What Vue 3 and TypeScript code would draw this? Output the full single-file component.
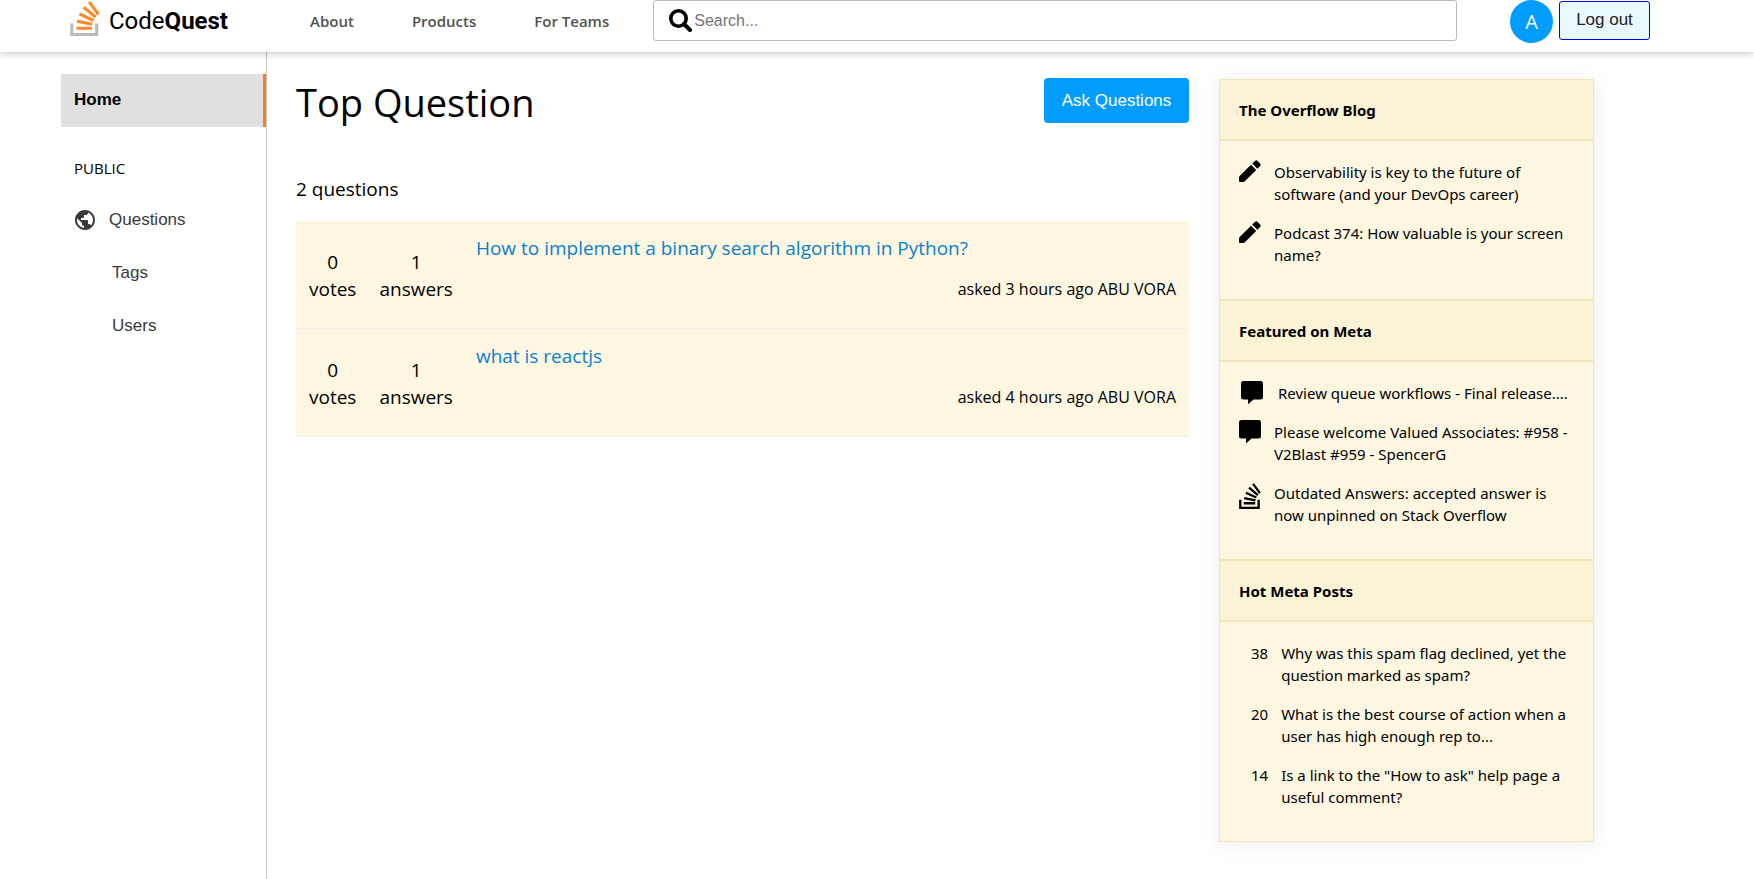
<script setup lang="ts">
import { ref } from 'vue'

interface Question {
  id: number
  votes: number
  answers: number
  title: string
  asked: string
  author: string
}

type IconName = 'pencil' | 'comment' | 'stack'

interface WidgetItem {
  icon?: IconName
  score?: number
  text: string
  single?: boolean
}

interface WidgetSection {
  title: string
  items: WidgetItem[]
}

const query = ref('')

const navLinks: string[] = ['About', 'Products', 'For Teams']

const questions: Question[] = [
  { id: 1, votes: 0, answers: 1, title: 'How to implement a binary search algorithm in Python?', asked: '3 hours ago', author: 'ABU VORA' },
  { id: 2, votes: 0, answers: 1, title: 'what is reactjs', asked: '4 hours ago', author: 'ABU VORA' },
]

const sections: WidgetSection[] = [
  {
    title: 'The Overflow Blog',
    items: [
      { icon: 'pencil', text: 'Observability is key to the future of software (and your DevOps career)' },
      { icon: 'pencil', text: 'Podcast 374: How valuable is your screen name?' },
    ],
  },
  {
    title: 'Featured on Meta',
    items: [
      { icon: 'comment', text: 'Review queue workflows - Final release....', single: true },
      { icon: 'comment', text: 'Please welcome Valued Associates: #958 - V2Blast #959 - SpencerG' },
      { icon: 'stack', text: 'Outdated Answers: accepted answer is now unpinned on Stack Overflow' },
    ],
  },
  {
    title: 'Hot Meta Posts',
    items: [
      { score: 38, text: 'Why was this spam flag declined, yet the question marked as spam?' },
      { score: 20, text: 'What is the best course of action when a user has high enough rep to...' },
      { score: 14, text: 'Is a link to the "How to ask" help page a useful comment?' },
    ],
  },
]

const iconBox: Record<IconName, string> = {
  pencil: '0 0 22 23',
  comment: '0 0 22 23',
  stack: '1.89 -2 20.22 26',
}

const iconPath: Record<IconName, string> = {
  pencil:
    'M12 4.800L17.200 10L5.800 21.300Q5.200 22 4.200 22H.8Q0 22 0 21.200V17.800Q0 16.800 .7 16.100zM13.200 3.600L16 .9Q17.300 -.2 18.600 .9L21.100 3.400Q22.200 4.700 21.100 6L18.400 8.800z',
  comment:
    'M2.5 0h17A2.5 2.5 0 0 1 22 2.500v13.500A2.500 2.500 0 0 1 19.500 18.500H12.500L7.500 23H7V18.500H2.500A2.500 2.500 0 0 1 0 16V2.500A2.500 2.500 0 0 1 2.500 0z',
  stack:
    'M15.725 0l-1.72 1.277 6.39 8.588 1.716-1.277L15.725 0zm-3.94 3.418l-1.369 1.644 8.225 6.85 1.369-1.644-8.225-6.85zm-3.15 4.465l-.905 1.94 9.702 4.517.904-1.94-9.701-4.517zm-1.85 4.86l-.44 2.093 10.473 2.201.44-2.092-10.473-2.203zM1.89 15.47V24h19.19v-8.53h-2.133v6.397H4.021v-6.396H1.89zm4.265 2.133v2.13h10.66v-2.13H6.154z',
}
</script>

<template>
  <div class="app">
    <header class="topbar">
      <a class="logo" href="#" aria-label="CodeQuest">
        <svg class="logo-mark" viewBox="1.89 0 20.22 24" aria-hidden="true">
          <path fill="#fb8b2a" d="M15.725 0l-1.72 1.277 6.39 8.588 1.716-1.277L15.725 0zm-3.94 3.418l-1.369 1.644 8.225 6.85 1.369-1.644-8.225-6.85zm-3.15 4.465l-.905 1.94 9.702 4.517.904-1.94-9.701-4.517zm-1.85 4.86l-.44 2.093 10.473 2.201.44-2.092-10.473-2.203zM6.155 17.603v2.13h10.66v-2.13H6.154z" />
          <path fill="#bcbbbb" d="M1.890 15.470V24h19.190v-8.530h-2.133v6.397H4.021v-6.396H1.890z" />
        </svg>
        <span class="logo-text">Code<b>Quest</b></span>
      </a>
      <nav class="nav">
        <a v-for="link in navLinks" :key="link" href="#">{{ link }}</a>
      </nav>
      <form class="search" @submit.prevent>
        <svg viewBox="0 0 23 23" aria-hidden="true">
          <circle cx="9.500" cy="9.500" r="7.700" fill="none" stroke="#000" stroke-width="3.600" />
          <path d="M15 15l6 6" stroke="#000" stroke-width="4" stroke-linecap="round" />
        </svg>
        <input v-model="query" type="text" placeholder="Search..." aria-label="Search" />
      </form>
      <a class="avatar" href="#">A</a>
      <button class="logout" type="button">Log out</button>
    </header>

    <div class="page">
      <nav class="sidebar">
        <a class="home" href="#">Home</a>
        <p class="group">PUBLIC</p>
        <a class="side-link with-icon" href="#">
          <svg viewBox="2 2 20 20" aria-hidden="true">
            <path fill="#3a3a3a" d="M12 2C6.480 2 2 6.480 2 12s4.480 10 10 10 10-4.480 10-10S17.520 2 12 2zm-1 17.930c-3.950-.49-7-3.850-7-7.930 0-.62.08-1.210.21-1.790L9 15v1c0 1.100.9 2 2 2v1.930zm6.900-2.540c-.26-.81-1-1.390-1.900-1.390h-1v-3c0-.55-.45-1-1-1H8v-2h2c.55 0 1-.45 1-1V7h2c1.100 0 2-.9 2-2v-.41c2.930 1.190 5 4.060 5 7.410 0 2.080-.8 3.970-2.100 5.390z" />
          </svg>
          Questions
        </a>
        <a class="side-link" href="#">Tags</a>
        <a class="side-link" href="#">Users</a>
      </nav>

      <main class="main">
        <div class="main-head">
          <h1>Top Question</h1>
          <button class="ask" type="button">Ask Questions</button>
        </div>
        <p class="count">{{ questions.length }} questions</p>
        <div class="list">
          <article v-for="q in questions" :key="q.id" class="question">
            <div class="stat"><span>{{ q.votes }}</span><span>votes</span></div>
            <div class="stat"><span>{{ q.answers }}</span><span>answers</span></div>
            <div class="body">
              <a href="#">{{ q.title }}</a>
              <p>asked {{ q.asked }} {{ q.author }}</p>
            </div>
          </article>
        </div>
      </main>

      <aside class="widget">
        <section v-for="s in sections" :key="s.title">
          <h2>{{ s.title }}</h2>
          <ul>
            <li v-for="item in s.items" :key="item.text" :class="{ single: item.single, scored: item.score !== undefined }">
              <svg v-if="item.icon" :class="item.icon" :viewBox="iconBox[item.icon]" aria-hidden="true">
                <path :d="iconPath[item.icon]" />
              </svg>
              <span v-else>{{ item.score }}</span>
              <p>{{ item.text }}</p>
            </li>
          </ul>
        </section>
      </aside>
    </div>
  </div>
</template>

<style>
body {
  margin: 0;
  background: #fff;
}
</style>

<style scoped>
.app {
  display: flex;
  flex-direction: column;
  min-height: 100vh;
  color: #000;
  font-family: 'Open Sans', 'Noto Sans', sans-serif;
}
.app * {
  box-sizing: border-box;
}
h1,
h2,
p,
ul {
  margin: 0;
  padding: 0;
  font-weight: 400;
}
a {
  color: inherit;
  text-decoration: none;
}

.topbar {
  position: relative;
  display: flex;
  align-items: flex-start;
  height: 52px;
  padding: 0 104px 0 70px;
  background: #fff;
  box-shadow: 0 1px 8px rgba(0, 0, 0, 0.25);
}
.logo {
  display: flex;
  gap: 9px;
  width: 208px;
  padding-top: 1px;
}
.logo-mark {
  width: 30px;
  height: 35px;
}
.logo-text {
  font-family: Roboto, sans-serif;
  font-size: 24px;
  line-height: 40px;
}
.nav {
  display: flex;
  gap: 58px;
  margin: 0 44px 0 32px;
  color: #525252;
  font-size: 15px;
  font-weight: 600;
  line-height: 42px;
  white-space: nowrap;
}
.search {
  display: flex;
  flex: 1;
  align-items: center;
  gap: 2px;
  height: 41px;
  padding: 0 15px;
  border: 1px solid #bbb;
  border-radius: 3px;
}
.search svg {
  width: 23px;
  height: 23px;
}
.search input {
  flex: 1;
  min-width: 0;
  padding: 0;
  border: 0;
  outline: 0;
  background: none;
  font: 16px/24px 'Liberation Sans', sans-serif;
}
.search input::placeholder {
  color: #757575;
}
.avatar {
  width: 43px;
  height: 43px;
  margin: 0 6px 0 53px;
  border-radius: 50%;
  background: #009dff;
  color: #fff;
  font-size: 20px;
  line-height: 43px;
  text-align: center;
}
.logout {
  width: 91px;
  height: 39px;
  margin-top: 1px;
  padding: 0 0 2px;
  border: 1px solid #00f;
  border-radius: 3px;
  background: #e7f8fe;
  color: #222;
  font: 17px/24px 'Liberation Sans', sans-serif;
}

.page {
  display: flex;
  flex: 1;
  align-items: flex-start;
  padding: 0 160px 0 61px;
}
.sidebar {
  display: flex;
  flex: none;
  flex-direction: column;
  align-self: stretch;
  width: 206px;
  padding-top: 22px;
  border-right: 1px solid #c4c4c4;
  color: #3a3a3a;
  font-family: 'Liberation Sans', sans-serif;
  font-size: 17px;
}
.home {
  padding: 0 0 2px 13px;
  border-right: 3px solid #f48225;
  background: #e0e0e0;
  color: #000;
  font-weight: 700;
  line-height: 51px;
}
.group {
  margin: 30px 0 14px 13px;
  color: #000;
  font-family: 'Open Sans', 'Noto Sans', sans-serif;
  font-size: 15px;
  line-height: 22px;
}
.side-link {
  padding-left: 51px;
  line-height: 53px;
}
.with-icon {
  display: flex;
  align-items: center;
  gap: 14px;
  padding-left: 14px;
}
.with-icon svg {
  width: 20px;
  height: 20px;
}

.main {
  flex: 1;
  min-width: 0;
  margin: 26px 30px 0 29px;
}
.main-head {
  display: flex;
  align-items: flex-start;
  justify-content: space-between;
}
h1 {
  font-size: 38px;
  line-height: 48px;
}
.ask {
  width: 145px;
  height: 45px;
  padding: 0;
  border: 0;
  border-radius: 4px;
  background: #009dff;
  color: #fff;
  font: 17px/24px 'Liberation Sans', sans-serif;
}
.count {
  margin: 50px 0 18px;
  font-size: 19px;
  line-height: 27px;
}
.question {
  display: flex;
  height: 108px;
  padding: 13px;
  border-bottom: 1px solid #edeff1;
  background: #fdf7e2;
}
.stat {
  display: flex;
  flex-direction: column;
  align-items: center;
  margin: 15px 23px 0 0;
  font-size: 19px;
  line-height: 27px;
}
.body {
  flex: 1;
}
.body a {
  color: #0a80cc;
  font-size: 19px;
  line-height: 28px;
}
.body p {
  margin-top: 16px;
  font-size: 16px;
  line-height: 22px;
  text-align: right;
}

.widget {
  flex: none;
  width: 375px;
  margin-top: 27px;
  border: 1px solid #f1e5bc;
  background: #fdf7e2;
  box-shadow: 0 2px 20px rgba(0, 0, 0, 0.08);
  font-family: 'Noto Sans', 'Open Sans', sans-serif;
  font-size: 15px;
  line-height: 22px;
}
.widget section + section {
  border-top: 2px solid #f1e5bc;
}
h2 {
  padding: 19px 19px 18px;
  border-bottom: 2px solid #f1e5bc;
  background: #fbf3d5;
  font-size: 15px;
  font-weight: 700;
  line-height: 22px;
}
.widget ul {
  padding: 19px 19px 33px;
  list-style: none;
}
.widget li {
  display: flex;
  gap: 13px;
  margin-bottom: 16px;
}
.widget li:last-child {
  margin-bottom: 0;
}
.widget li p,
.widget li span {
  padding-top: 1px;
}
.widget .single {
  gap: 15px;
  padding-left: 2px;
}
.widget .scored {
  padding-left: 12px;
}
.widget svg {
  flex: none;
  width: 22px;
  height: 23px;
}
.widget .stack {
  height: 28px;
}
</style>
